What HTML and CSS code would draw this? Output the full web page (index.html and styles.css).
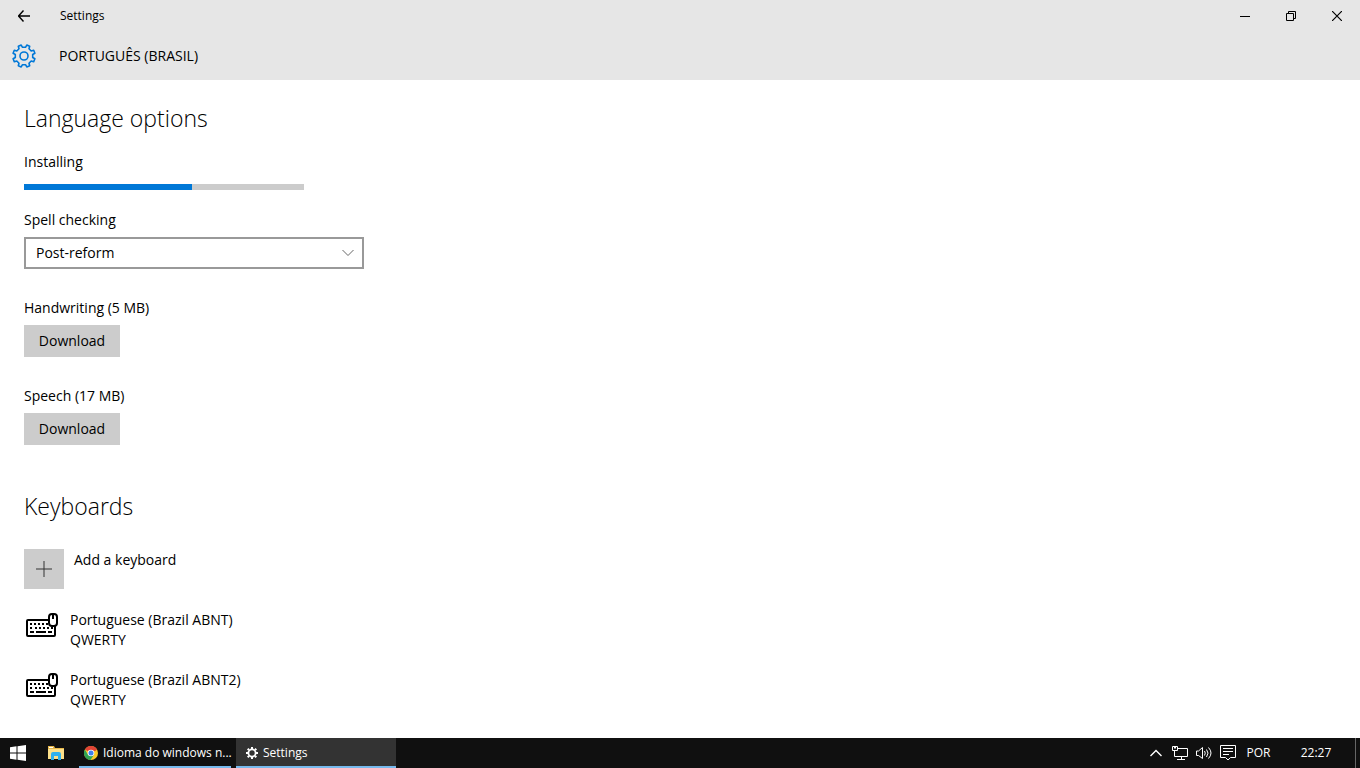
FILE: index.html
```html
<!DOCTYPE html>
<html lang="en">
<head>
    <title>Settings</title>
    <meta charset="utf-8">
    <meta name="viewport" content="width=device-width, initial-scale=1">
    <link rel="stylesheet" href="styles.css">
</head>
<body>
    <header class="header">
        <div class="titlebar">
            <button class="back" aria-label="Back">
                <svg width="12" height="12" viewBox="0 0 12 12"><path stroke-width="1.4" d="M0.5 6H12M5.5 0.5L0.5 6L5.5 11.5" /></svg>
            </button>
            <span class="app-name">Settings</span>
            <button class="win-btn" aria-label="Minimize">
                <svg width="10" height="10" viewBox="0 0 10 10"><path d="M0 3.5H10" /></svg>
            </button>
            <button class="win-btn" aria-label="Restore">
                <svg width="10" height="10" viewBox="0 0 10 10"><path d="M0.5 2.5H7.5V9.5H0.5ZM2.5 2.5V0.5H9.5V7.5H7.5" /></svg>
            </button>
            <button class="win-btn" aria-label="Close">
                <svg width="10" height="10" viewBox="0 0 10 10"><path stroke-width="1.2" d="M0 0L10 10M10 0L0 10" /></svg>
            </button>
        </div>
        <div class="page-title">
            <svg class="gear" width="24" height="24" viewBox="-12 -12 24 24">
                <path d="M1.5 -8.7L2.8 -10.9L5.7 -9.7L5 -7.2L7.2 -5L9.7 -5.7L10.9 -2.8L8.7 -1.5V1.5L10.9 2.8L9.7 5.7L7.2 5L5 7.2L5.7 9.7L2.8 10.9L1.5 8.7H-1.5L-2.8 10.9L-5.7 9.7L-5 7.2L-7.2 5L-9.7 5.7L-10.9 2.8L-8.7 1.5V-1.5L-10.9 -2.8L-9.7 -5.7L-7.2 -5L-5 -7.2L-5.7 -9.7L-2.8 -10.9L-1.5 -8.7Z" />
                <circle r="4" />
            </svg>
            <h1>PORTUGUÊS (BRASIL)</h1>
        </div>
    </header>

    <main class="content">
        <!-- Language options -->
        <section class="options">
            <h2>Language options</h2>
            <div class="field">
                <label for="install">Installing</label>
                <progress id="install" value="60" max="100"></progress>
            </div>
            <div class="field">
                <label for="spell">Spell checking</label>
                <div class="select-box">
                    <select id="spell">
                        <option>Post-reform</option>
                        <option>Pre-reform</option>
                    </select>
                    <svg class="arrow" width="12" height="8" viewBox="0 0 12 8"><path d="M0.5 1L6 6.5L11.5 1" /></svg>
                </div>
            </div>
            <div class="field">
                <span id="handwriting">Handwriting (5 MB)</span>
                <button class="download" aria-describedby="handwriting">Download</button>
            </div>
            <div class="field">
                <span id="speech">Speech (17 MB)</span>
                <button class="download" aria-describedby="speech">Download</button>
            </div>
        </section>

        <!-- Keyboards -->
        <section class="keyboards">
            <h2>Keyboards</h2>
            <button class="add">
                <span class="plus">
                    <svg width="16" height="16" viewBox="0 0 16 16"><path d="M0 8H16M8 0V16" /></svg>
                </span>
                <span class="label">Add a keyboard</span>
            </button>
            <ul>
                <li>
                    <svg class="kbd" width="32" height="24" viewBox="0 0 32 24">
                        <rect class="case" x="1" y="7" width="28" height="16" rx="1" />
                        <path class="keys" d="M4 11H6M8 11H10M12 11H14M16 11H18M20 11H22M4 15H6M9 15H11M13 15H15M17 15H19M21 15H23M25 15H27M4 19H8M10 19H20M22 19H26" />
                        <rect class="mouse" x="23" y="1" width="8" height="12" rx="3" />
                        <path class="wheel" d="M27 2V6" />
                    </svg>
                    <div class="label">Portuguese (Brazil ABNT)<br>QWERTY</div>
                </li>
                <li>
                    <svg class="kbd" width="32" height="24" viewBox="0 0 32 24">
                        <rect class="case" x="1" y="7" width="28" height="16" rx="1" />
                        <path class="keys" d="M4 11H6M8 11H10M12 11H14M16 11H18M20 11H22M4 15H6M9 15H11M13 15H15M17 15H19M21 15H23M25 15H27M4 19H8M10 19H20M22 19H26" />
                        <rect class="mouse" x="23" y="1" width="8" height="12" rx="3" />
                        <path class="wheel" d="M27 2V6" />
                    </svg>
                    <div class="label">Portuguese (Brazil ABNT2)<br>QWERTY</div>
                </li>
            </ul>
        </section>
    </main>

    <footer class="taskbar">
        <button class="launch" aria-label="Start">
            <svg width="16" height="16" viewBox="0 0 16 16"><path fill="#fff" d="M0 2.2L6.5 1.3V7.5H0ZM7.5 1.2L16 0V7.5H7.5ZM0 8.5H6.5V14.7L0 13.8ZM7.5 8.5H16V16L7.5 14.8Z" /></svg>
        </button>
        <button class="launch" aria-label="File Explorer">
            <svg width="16" height="14" viewBox="0 0 16 14">
                <path fill="#e8b84a" d="M0 0H6L7 2H16V13H0Z" />
                <path fill="#fde08a" d="M0 3H16V13H0Z" />
                <path fill="#fff" d="M1 1H5V2H1Z" />
                <path fill="#2fb0ee" d="M3 8Q3 6 5 6H11Q13 6 13 8V14H10V10H6V14H3Z" />
            </svg>
        </button>
        <button class="task">
            <svg width="14" height="14" viewBox="0 0 14 14">
                <circle cx="7" cy="7" r="7" fill="#fbc928" />
                <path fill="#e24436" d="M7 7L0.9 3.5A7 7 0 0 1 13.1 3.5Z" />
                <path fill="#e24436" d="M7 3.5H13.1L11 5H7Z" />
                <path fill="#30a454" d="M0.9 3.5A7 7 0 0 0 6.5 14L10 8.8L7 7L4 8.8Z" />
                <circle cx="7" cy="7" r="3.3" fill="#fff" />
                <circle cx="7" cy="7" r="2.5" fill="#3f80ee" />
            </svg>
            <span>Idioma do windows n...</span>
        </button>
        <button class="task active">
            <svg width="12" height="12" viewBox="-6 -6 12 12">
                <circle r="3.6" fill="none" stroke="#fff" stroke-width="1.8" />
                <path stroke="#fff" stroke-width="2" d="M0 -6V-4M0 6V4M-6 0H-4M6 0H4M-4.3 -4.3L-3 -3M4.3 -4.3L3 -3M-4.3 4.3L-3 3M4.3 4.3L3 3" />
            </svg>
            <span>Settings</span>
        </button>

        <div class="tray">
            <button aria-label="Show hidden icons">
                <svg width="12" height="16" viewBox="0 0 12 16"><path stroke-width="1.4" d="M0.5 11L6 5.5L11.5 11" /></svg>
            </button>
            <button aria-label="Network">
                <svg width="16" height="16" viewBox="0 0 16 16">
                    <path d="M6 3.5H15.5V11.5H2.5V6M9.5 11.5V14.5M5 14.5H13" />
                    <path d="M0.5 1.5H5.5V5.5H0.5ZM2.5 1.5V3.5M3.5 1.5V3.5" />
                </svg>
            </button>
            <button aria-label="Volume">
                <svg width="16" height="16" viewBox="0 0 16 16">
                    <path d="M0.5 6V10.5H2.5L6.5 13.5V2.5L2.5 6Z" />
                    <path d="M8.5 6Q10 8 8.5 10.5M10.5 4.5Q13.5 8 10.5 12M12.5 2.5Q17.5 8 12.5 13.5" />
                </svg>
            </button>
            <button aria-label="Notifications">
                <svg width="16" height="16" viewBox="0 0 16 16"><path d="M0.5 0.5H15.5V12.5H10.5L8 15L5.5 12.5H0.5ZM3 3.5H13M3 6.5H13M3 9.5H9" /></svg>
            </button>
            <button class="lang">POR</button>
            <button class="clock">22:27</button>
            <button class="desktop" aria-label="Show desktop"></button>
        </div>
    </footer>
</body>
</html>
```
FILE: styles.css
```css
* {
    box-sizing: border-box;
}

body {
    margin: 0;
    min-height: 100vh;
    display: flex;
    flex-direction: column;
    font-family: "Open Sans", "Noto Sans", sans-serif;
    font-size: 14px;
    line-height: 20px;
    color: #000;
    background-color: #fff;
}

button {
    padding: 0;
    border: none;
    background: none;
    color: inherit;
    font: inherit;
}

svg {
    display: block;
    flex: none;
}

/* Header */
.header {
    background-color: #e6e6e6;
}

.titlebar {
    display: flex;
    height: 32px;
    align-items: center;
}

.titlebar svg {
    margin: 0 auto;
    fill: none;
    stroke: #000;
}

.back {
    width: 48px;
    height: 32px;
}

.app-name {
    flex: 1;
    padding-left: 12px;
    font-size: 12px;
}

.win-btn {
    width: 46px;
    height: 32px;
}

.win-btn:nth-of-type(2) path {
    transform: translateY(2px);
}

.page-title {
    display: flex;
    align-items: center;
    gap: 23px;
    height: 48px;
    padding: 0 12px;
}

.gear {
    fill: none;
    stroke: #0078d7;
    stroke-width: 1.6;
    stroke-linejoin: round;
}

h1 {
    margin: 0;
    font-size: 14px;
    font-weight: normal;
}

/* Content */
.content {
    flex: 1;
    padding: 22px 24px 26px;
}

h2 {
    margin: 0;
    font-size: 23px;
    font-weight: 300;
    line-height: 32px;
}

.options h2 {
    margin-bottom: 2px;
}

.options {
    display: flex;
    flex-direction: column;
    gap: 16px;
}

.field {
    display: flex;
    flex-direction: column;
    align-items: flex-start;
    gap: 7px;
    margin-bottom: 13px;
}

.field:has(progress) {
    gap: 12px;
    margin-bottom: 4px;
}

progress {
    appearance: none;
    width: 280px;
    height: 6px;
    border: none;
    background-color: #ccc;
}

progress::-webkit-progress-bar {
    background-color: #ccc;
}

progress::-webkit-progress-value {
    background-color: #0078d7;
}

.select-box {
    position: relative;
    width: 340px;
    max-width: 100%;
}

select {
    appearance: none;
    width: 100%;
    height: 32px;
    padding: 0 32px 0 10px;
    border: 2px solid #999;
    border-radius: 0;
    background-color: #fff;
    color: #000;
    font: inherit;
}

.arrow {
    position: absolute;
    top: 12px;
    right: 10px;
    fill: none;
    stroke: #666;
    pointer-events: none;
}

.download {
    width: 96px;
    height: 32px;
    background-color: #ccc;
}

.keyboards {
    margin-top: 32px;
}

.add {
    display: flex;
    align-items: flex-start;
    gap: 10px;
    margin: 27px 0 20px;
}

.plus {
    display: flex;
    align-items: center;
    justify-content: center;
    width: 40px;
    height: 40px;
    background-color: #ccc;
}

.plus svg {
    stroke: #333;
}

.label {
    padding-top: 1px;
}

ul {
    display: flex;
    flex-direction: column;
    gap: 19px;
    margin: 0;
    padding: 0;
    list-style: none;
}

li {
    display: flex;
    gap: 12px;
    padding-left: 2px;
}

.kbd {
    margin-top: 4px;
    fill: #fff;
    stroke: #000;
    stroke-width: 2;
}

/* Taskbar */
.taskbar {
    display: flex;
    height: 30px;
    background-color: #101010;
    color: #fff;
    font-size: 12px;
}

.launch {
    width: 36px;
    height: 30px;
}

.launch + .launch {
    width: 40px;
}

.launch svg {
    margin: 0 auto;
}

.task {
    display: flex;
    align-items: center;
    gap: 5px;
    width: 152px;
    height: 30px;
    padding-left: 5px;
    border-bottom: 2px solid #76b9ed;
    border-top: 2px solid transparent;
    white-space: nowrap;
}

.launch + .task {
    margin-left: 3px;
}

.task.active {
    width: 160px;
    margin-left: 5px;
    padding-left: 10px;
    background-color: #333;
}

.tray {
    display: flex;
    align-items: center;
    margin-left: auto;
}

.tray button {
    width: 24px;
    height: 30px;
}

.tray svg {
    margin: 0 auto;
    fill: none;
    stroke: #fff;
}

.tray .lang {
    width: 37px;
}

.tray .clock {
    width: 78px;
}

.tray .desktop {
    width: 5px;
    border-left: 1px solid #666;
}
```
